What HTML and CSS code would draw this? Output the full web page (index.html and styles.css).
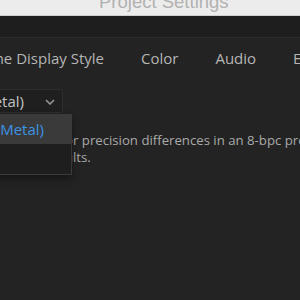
FILE: index.html
```html
<!DOCTYPE html>
<html lang="en">
<head>
    <meta charset="UTF-8">
    <title>Project Settings</title>
    <link rel="stylesheet" href="styles.css">
</head>
<body>

<div class="titlebar">
    <span class="title">Project Settings</span>
</div>

<div class="toolbar"></div>

<div class="tabs">
    <div class="tab-clip">
        <span class="tab">Time Display Style</span>
    </div>
    <span class="tab">Color</span>
    <span class="tab">Audio</span>
    <span class="tab">Effects</span>
</div>

<div class="panel">
    <div class="select-clip">
        <div class="select">
            <span class="select-text">Mercury Playback Engine GPU Acceleration (Metal)</span>
            <svg class="chevron" width="10" height="6" viewBox="0 0 10 6">
                <path d="M1 1 L5 5 L9 1" fill="none" stroke="#9a9a9a" stroke-width="1.5"/>
            </svg>
        </div>
    </div>

    <div class="note">
        <div class="line"><span class="lead">Use high bit depth color to compensate fo</span><span>r precision differences in an 8-bpc project.</span></div>
        <div class="line"><span class="lead">This may give more accurate resu</span><span>lts.</span></div>
    </div>

    <ul class="menu">
        <li class="item active">Mercury Playback Engine GPU Acceleration (Metal)</li>
        <li class="item">Mercury Playback Engine Software Only</li>
    </ul>
</div>

</body>
</html>
```

FILE: styles.css
```css
body {
    margin: 0;
    width: 300px;
    height: 300px;
    overflow: hidden;
    background-color: #232323;
    font-family: 'Open Sans', 'Noto Sans', sans-serif;
}

.titlebar {
    height: 15px;
    background-color: #ececec;
    border-bottom: 1px solid #cfcfcf;
    overflow: hidden;
}

.title {
    display: block;
    margin-top: -8px;
    padding-left: 99px;
    font-family: 'Liberation Sans', sans-serif;
    font-size: 18.5px;
    line-height: 20px;
    color: #b2b2b2;
    white-space: nowrap;
}

.toolbar {
    height: 21px;
    background-color: #1e1e1e;
    border-bottom: 1px solid #2b2b2b;
}

.tabs {
    display: flex;
    align-items: center;
    gap: 37px;
    height: 40px;
    white-space: nowrap;
}

.tab {
    font-size: 15px;
    color: #b5b5b5;
}

.tab-clip {
    width: 104px;
    flex-shrink: 0;
    display: flex;
    justify-content: flex-end;
}

.panel {
    position: relative;
    padding-top: 11px;
}

.select-clip {
    width: 63px;
    display: flex;
    justify-content: flex-end;
}

.select {
    flex-shrink: 0;
    display: flex;
    align-items: center;
    height: 22px;
    padding: 0 7px 0 10px;
    background-color: #1f1f1f;
    border: 1px solid #2e2e2e;
    border-radius: 3px;
    white-space: nowrap;
}

.select-text {
    font-size: 15px;
    color: #c4c4c4;
}

.chevron {
    margin-left: 21px;
    margin-top: 2px;
}

.note {
    margin-top: 19px;
    font-size: 13.2px;
    line-height: 17px;
    color: #a9a9a9;
    white-space: nowrap;
}

.line {
    display: flex;
}

.lead {
    width: 73px;
    flex-shrink: 0;
    display: flex;
    justify-content: flex-end;
}

.menu {
    position: absolute;
    top: 36px;
    right: calc(100% - 72px);
    margin: 0;
    padding: 0 0 1px;
    list-style: none;
    background-color: #1e1e1e;
    border: 1px solid #3a3a3a;
    box-shadow: 0 4px 8px rgba(0, 0, 0, 0.4);
    white-space: nowrap;
}

.item {
    height: 29px;
    line-height: 29px;
    padding: 0 27px 0 12px;
    font-size: 15px;
    color: #c4c4c4;
}

.item.active {
    background-color: #3a3a3a;
    color: #3c93e6;
}
```
